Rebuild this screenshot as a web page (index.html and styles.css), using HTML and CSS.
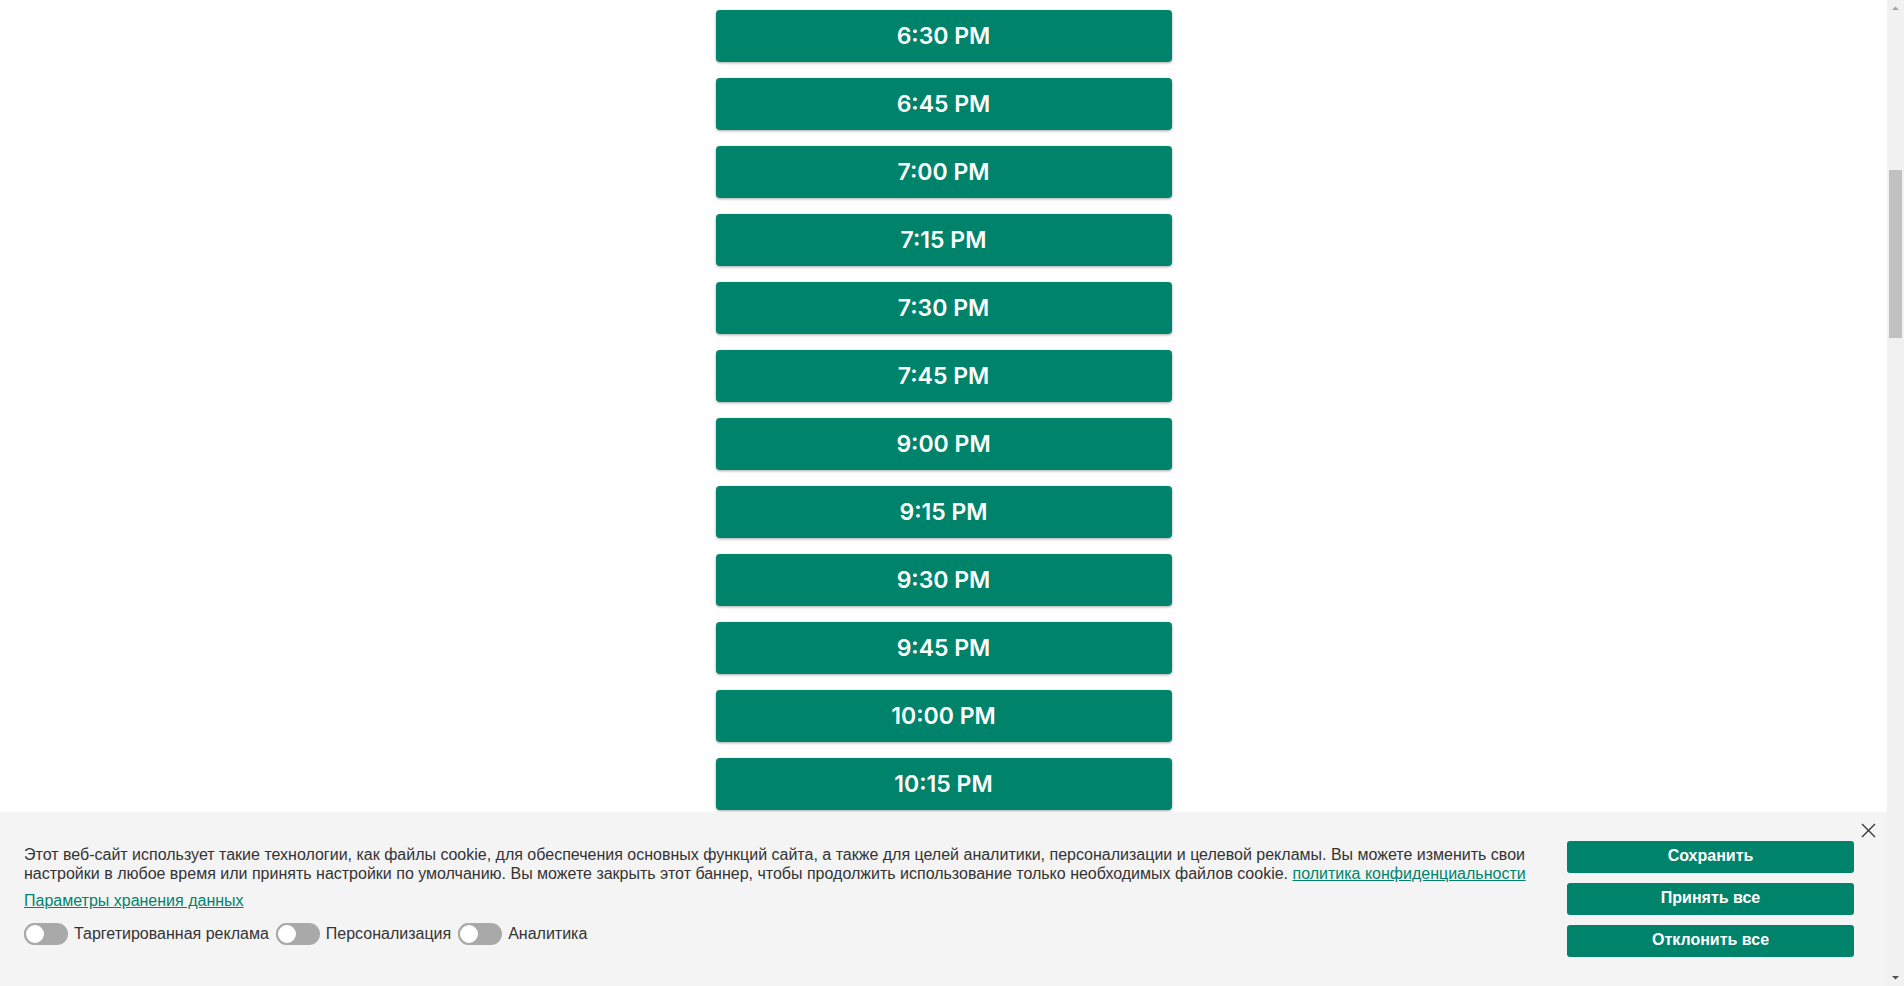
FILE: index.html
```html
<!DOCTYPE html>
<html lang="ru">
<head>
<meta charset="utf-8">
<title>Выбор времени</title>
<link rel="stylesheet" href="styles.css">
</head>
<body>
<div class="window">
  <main class="page">
    <div class="slots">
      <button class="slot">6:30 PM</button>
      <button class="slot">6:45 PM</button>
      <button class="slot">7:00 PM</button>
      <button class="slot">7:15 PM</button>
      <button class="slot">7:30 PM</button>
      <button class="slot">7:45 PM</button>
      <button class="slot">9:00 PM</button>
      <button class="slot">9:15 PM</button>
      <button class="slot">9:30 PM</button>
      <button class="slot">9:45 PM</button>
      <button class="slot">10:00 PM</button>
      <button class="slot">10:15 PM</button>
      <button class="slot">10:30 PM</button>
    </div>

    <section class="cookie">
      <div class="cookie-text">
        <p class="cookie-msg">Этот веб-сайт использует такие технологии, как файлы cookie, для обеспечения основных функций сайта, а также для целей аналитики, персонализации и целевой рекламы. Вы можете изменить свои настройки в любое время или принять настройки по умолчанию. Вы можете закрыть этот баннер, чтобы продолжить использование только необходимых файлов cookie. <a href="#" class="link">политика конфиденциальности</a></p>
        <p class="cookie-params"><a href="#" class="link">Параметры хранения данных</a></p>
        <div class="toggles">
          <label class="toggle"><span class="switch"><span class="knob"></span></span>Таргетированная реклама</label>
          <label class="toggle"><span class="switch"><span class="knob"></span></span>Персонализация</label>
          <label class="toggle"><span class="switch"><span class="knob"></span></span>Аналитика</label>
        </div>
      </div>
      <div class="cookie-actions">
        <button class="cbtn">Сохранить</button>
        <button class="cbtn">Принять все</button>
        <button class="cbtn">Отклонить все</button>
      </div>
      <button class="close" aria-label="Закрыть">
        <svg width="15" height="15" viewBox="0 0 15 15"><path d="M1 1 L14 14 M14 1 L1 14" stroke="#333" stroke-width="1.3" fill="none"/></svg>
      </button>
    </section>
  </main>

  <div class="scrollbar">
    <div class="sb-arrow"><svg width="17" height="17" viewBox="0 0 17 17"><path d="M5 10 L8.5 6.5 L12 10 Z" fill="#a3a3a3"/></svg></div>
    <div class="sb-track"><div class="sb-thumb"></div></div>
    <div class="sb-arrow"><svg width="17" height="17" viewBox="0 0 17 17"><path d="M5 7 L8.5 10.5 L12 7 Z" fill="#505050"/></svg></div>
  </div>
</div>
</body>
</html>
```

FILE: styles.css
```css
* { box-sizing: border-box; }

html, body {
  margin: 0;
  padding: 0;
  height: 100%;
  overflow: hidden;
  background: #fff;
}

.window {
  display: flex;
  height: 986px;
  width: 100%;
}

.page {
  position: relative;
  flex: 1;
  overflow: hidden;
  background: #fff;
}

.slots {
  display: flex;
  flex-direction: column;
  align-items: center;
  gap: 16px;
  padding-top: 10px;
}

.slot {
  width: 456px;
  height: 52px;
  border: none;
  border-radius: 4px;
  background: #00836b;
  color: #fff;
  font-family: "Inter", "Open Sans", sans-serif;
  font-weight: 600;
  font-size: 23px;
  box-shadow: 0 1px 3px rgba(0, 0, 0, 0.35);
  padding: 0;
  cursor: pointer;
}

/* cookie banner */
.cookie {
  position: absolute;
  left: 0;
  right: 0;
  bottom: 0;
  height: 174px;
  background: #f4f4f4;
  display: flex;
  gap: 30px;
  padding: 29px 33px 0 24px;
  font-family: "Liberation Sans", Arial, sans-serif;
  color: #333;
}

.cookie-text {
  flex: 1;
  min-width: 0;
}

.cookie-msg {
  margin: 4px 0 0;
  font-size: 16px;
  line-height: 19px;
}

.cookie-params {
  margin: 8px 0 0;
  font-size: 16px;
  line-height: 19px;
}

.link {
  color: #00836b;
  text-decoration: underline;
}

.toggles {
  display: flex;
  align-items: center;
  gap: 7px;
  margin-top: 13px;
  font-size: 16px;
}

.toggle {
  display: inline-flex;
  align-items: center;
  gap: 6px;
}

.switch {
  display: inline-flex;
  align-items: center;
  width: 44px;
  height: 22px;
  border-radius: 11px;
  background: #a9a9a9;
}

.knob {
  width: 22px;
  height: 22px;
  border-radius: 50%;
  background: #fff;
  border: 2px solid #a9a9a9;
}

.cookie-actions {
  width: 287px;
  display: flex;
  flex-direction: column;
  gap: 10px;
}

.cbtn {
  height: 32px;
  border: none;
  border-radius: 3px;
  background: #00836b;
  color: #fff;
  font-family: "Liberation Sans", Arial, sans-serif;
  font-weight: bold;
  font-size: 16px;
  line-height: 30px;
  padding: 0 0 2px;
  cursor: pointer;
}

.close {
  position: absolute;
  top: 11px;
  right: 11px;
  width: 15px;
  height: 15px;
  border: none;
  background: none;
  padding: 0;
  cursor: pointer;
  display: flex;
}

/* fake scrollbar */
.scrollbar {
  width: 17px;
  height: 100%;
  background: #f1f1f1;
  display: flex;
  flex-direction: column;
}

.sb-arrow {
  height: 17px;
  display: flex;
}

.sb-track {
  flex: 1;
  padding: 153px 2px 0;
}

.sb-thumb {
  height: 168px;
  background: #c1c1c1;
}
```
